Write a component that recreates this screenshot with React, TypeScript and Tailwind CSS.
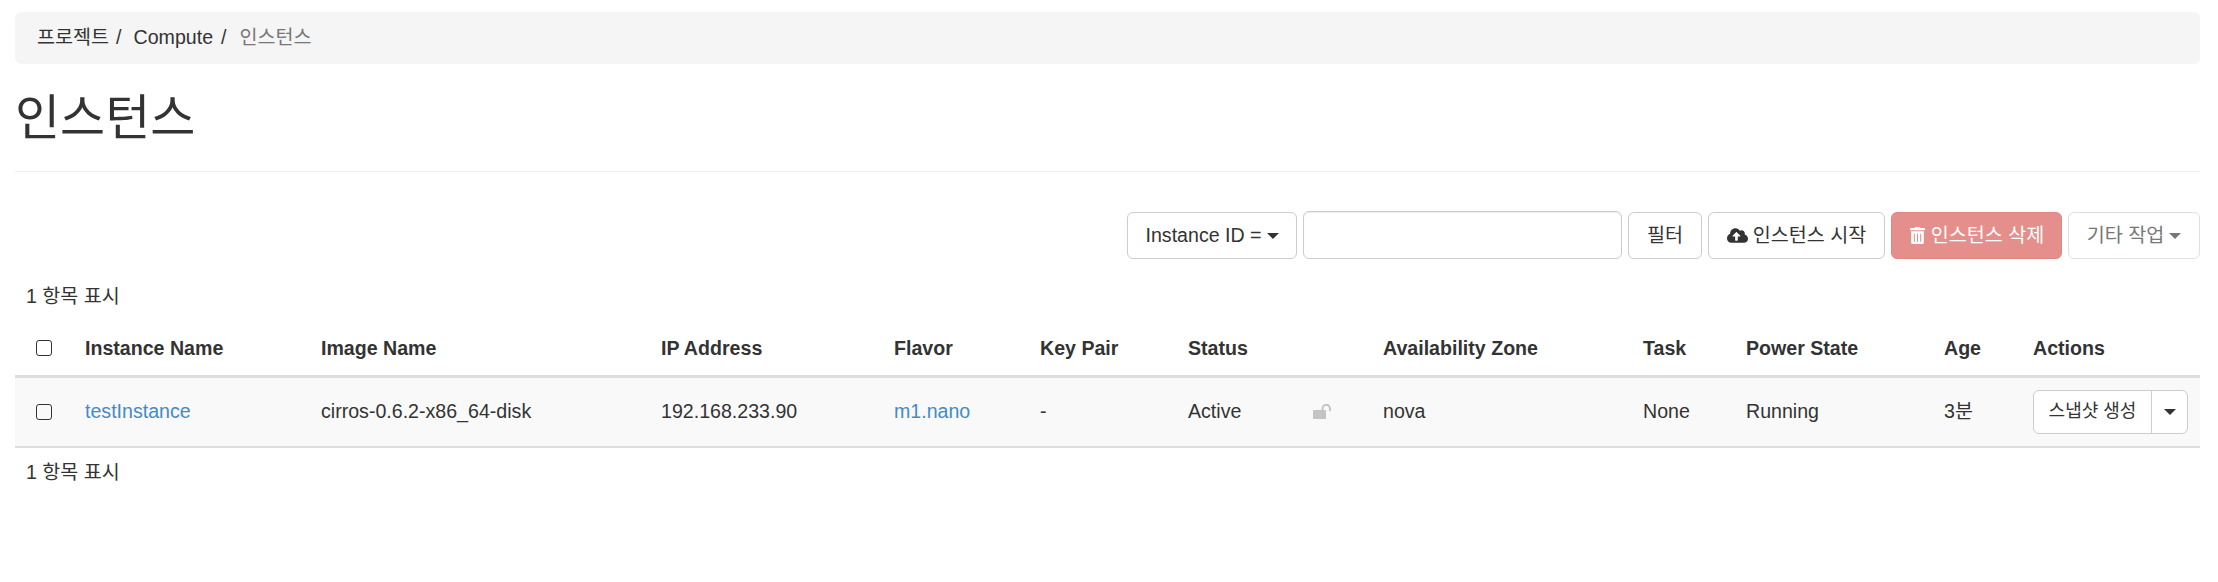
import type { ReactNode } from 'react'
import { FaCloudUploadAlt, FaTrashAlt } from 'react-icons/fa'

const HEADERS: { label: string; width: string }[] = [
  { label: 'Instance Name', width: 'w-[236px]' },
  { label: 'Image Name', width: 'w-[340px]' },
  { label: 'IP Address', width: 'w-[233px]' },
  { label: 'Flavor', width: 'w-[146px]' },
  { label: 'Key Pair', width: 'w-[148px]' },
  { label: 'Status', width: 'w-[125px]' },
  { label: '', width: 'w-[70px]' },
  { label: 'Availability Zone', width: 'w-[260px]' },
  { label: 'Task', width: 'w-[103px]' },
  { label: 'Power State', width: 'w-[198px]' },
  { label: 'Age', width: 'w-[89px]' },
  { label: 'Actions', width: 'w-auto' },
]

function Caret() {
  return <span className="inline-block w-0 h-0 border-x-[6px] border-x-transparent border-t-[6px] border-t-current" />
}

function Button({ className, children }: { className: string; children: ReactNode }) {
  return (
    <button className={`h-[47px] flex items-center justify-center rounded-[6px] border shrink-0 ${className}`}>
      {children}
    </button>
  )
}

function Checkbox() {
  return <input type="checkbox" className="block appearance-none w-[16px] h-[16px] border-[1.5px] border-[#333] rounded-[3px] bg-transparent" />
}

function UnlockIcon() {
  return (
    <svg width="19" height="15" viewBox="0 0 19 15" className="text-[#c4c4c4]">
      <rect x="0" y="6" width="13" height="9" rx="1" fill="currentColor" />
      <path d="M9.5 6.5V4.5a3.75 3.75 0 0 1 7.5 0V7" fill="none" stroke="currentColor" strokeWidth="2" />
    </svg>
  )
}

export default function App() {
  return (
    <div className="min-h-[582px] bg-white pl-[15px] pr-[18px] pt-[12px] text-[19.6px] text-[#333] font-['Liberation_Sans','Noto_Sans_CJK_KR',sans-serif]">
      {/* Breadcrumb */}
      <div className="h-[52px] flex items-center px-[22px] rounded-[6px] bg-[#f5f5f5]">
        <span>프로젝트</span>
        <span className="ml-[7px] mr-[12px]">/</span>
        <span>Compute</span>
        <span className="ml-[8px] mr-[13px]">/</span>
        <span className="text-[#777]">인스턴스</span>
      </div>

      <h1 className="mt-[26px] text-[49px] leading-[56px] font-normal">인스턴스</h1>
      <div className="mt-[25px] border-t border-[#eee]" />

      {/* Toolbar */}
      <div className="mt-[39px] flex justify-end items-start gap-[6px]">
        <Button className="w-[170px] mt-[1px] gap-[5px] bg-white border-[#ccc]">
          Instance ID = <Caret />
        </Button>
        <input className="block w-[319px] h-[48px] rounded-[6px] border border-[#ccc] bg-white shadow-[inset_0_1px_1px_rgba(0,0,0,0.075)]" />
        <Button className="w-[74px] mt-[1px] bg-white border-[#ccc]">필터</Button>
        <Button className="w-[177px] mt-[1px] gap-[5px] bg-white border-[#ccc]">
          <FaCloudUploadAlt className="text-[21px]" /> 인스턴스 시작
        </Button>
        <Button className="w-[171px] mt-[1px] gap-[5px] bg-[#e58f8c] border-[#e08784] text-white">
          <FaTrashAlt className="text-[17px]" /> 인스턴스 삭제
        </Button>
        <Button className="w-[132px] mt-[1px] gap-[5px] bg-white border-[#e0e0e0] text-[#777]">
          기타 작업 <Caret />
        </Button>
      </div>

      <div className="mt-[23px] pl-[11px] h-[28px] leading-[28px]">1 항목 표시</div>

      {/* Table */}
      <table className="mt-[11px] w-full table-fixed border-collapse">
        <colgroup>
          <col className="w-[59px]" />
          {HEADERS.map((h) => (
            <col key={h.label || 'locked'} className={h.width} />
          ))}
        </colgroup>
        <thead>
          <tr className="h-[55px] border-b-[3px] border-[#ddd]">
            <th className="px-[21px]">
              <Checkbox />
            </th>
            {HEADERS.map((h) => (
              <th key={h.label || 'locked'} className="px-[11px] pt-[1px] text-left font-bold">
                {h.label}
              </th>
            ))}
          </tr>
        </thead>
        <tbody>
          <tr className="h-[71px] bg-[#f9f9f9] border-b-2 border-[#ddd]">
            <td className="px-[21px]">
              <Checkbox />
            </td>
            <td className="px-[11px] text-[#428bca]">testInstance</td>
            <td className="px-[11px]">cirros-0.6.2-x86_64-disk</td>
            <td className="px-[11px]">192.168.233.90</td>
            <td className="px-[11px] text-[#428bca]">m1.nano</td>
            <td className="px-[11px]">-</td>
            <td className="px-[11px]">Active</td>
            <td className="px-[11px]">
              <UnlockIcon />
            </td>
            <td className="px-[11px]">nova</td>
            <td className="px-[11px]">None</td>
            <td className="px-[11px]">Running</td>
            <td className="px-[11px]">3분</td>
            <td className="px-[11px]">
              <div className="flex w-[155px] h-[44px] rounded-[6px] border border-[#ccc] bg-white text-[18px]">
                <span className="w-[118px] flex items-center justify-center border-r border-[#ccc]">스냅샷 생성</span>
                <span className="flex-1 flex items-center justify-center">
                  <Caret />
                </span>
              </div>
            </td>
          </tr>
        </tbody>
      </table>

      <div className="mt-[10px] pl-[11px] h-[28px] leading-[28px]">1 항목 표시</div>
    </div>
  )
}
